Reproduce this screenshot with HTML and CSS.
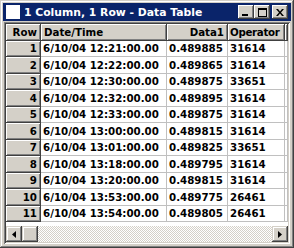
FILE: index.html
```html
<!DOCTYPE html>
<html lang="en">

<head>
    <meta charset="utf-8">
    <meta name="viewport" content="width=device-width, initial-scale=1.0">
    <title>1 Column, 1 Row - Data Table</title>
    <link rel="stylesheet" href="styles.css">
</head>

<body>

    <div class="vindue">
        <div class="titel">
            <span class="ikon"></span>
            <span class="titeltekst">1 Column, 1 Row - Data Table</span>
            <div class="knapper">
                <button class="knap"><svg width="8" height="7" viewBox="0 0 8 7"><rect x="0" y="5" width="6" height="2" fill="#000"/></svg></button>
                <button class="knap"><svg width="9" height="9" viewBox="0 0 9 9"><path d="M0 0h9v9h-9z M1 2v6h7v-6z" fill="#000" fill-rule="evenodd"/></svg></button>
                <button class="knap luk"><svg width="8" height="7" viewBox="0 0 8 7"><path d="M0 0h2l2 2.5 2-2.5h2l-3 3.5 3 3.5h-2l-2-2.5-2 2.5h-2l3-3.5z" fill="#000"/></svg></button>
            </div>
        </div>

        <div class="gitter">
            <div class="tabelomraade">
                <table>
                    <colgroup>
                        <col class="c-row">
                        <col class="c-dato">
                        <col class="c-data">
                        <col class="c-op">
                        <col>
                    </colgroup>
                    <thead>
                        <tr>
                            <th class="hoejre">Row</th>
                            <th>Date/Time</th>
                            <th class="hoejre">Data1</th>
                            <th class="op">Operator</th>
                            <th></th>
                        </tr>
                    </thead>
                    <tbody id="liste"></tbody>
                </table>
            </div>
            <div class="scroll">
                <div class="pil"><svg width="4" height="7" viewBox="0 0 4 7"><path d="M4 0v7l-4-3.5z" fill="#000"/></svg></div>
                <div class="greb"></div>
                <div class="spor"></div>
                <div class="pil"><svg width="4" height="7" viewBox="0 0 4 7"><path d="M0 0v7l4-3.5z" fill="#000"/></svg></div>
            </div>
        </div>
    </div>

    <script>
        let raekker = [
            ["6/10/04 12:21:00.00", "0.489885", "31614"],
            ["6/10/04 12:22:00.00", "0.489865", "31614"],
            ["6/10/04 12:30:00.00", "0.489875", "33651"],
            ["6/10/04 12:32:00.00", "0.489895", "31614"],
            ["6/10/04 12:33:00.00", "0.489875", "31614"],
            ["6/10/04 13:00:00.00", "0.489815", "31614"],
            ["6/10/04 13:01:00.00", "0.489825", "33651"],
            ["6/10/04 13:18:00.00", "0.489795", "31614"],
            ["6/10/04 13:20:00.00", "0.489815", "31614"],
            ["6/10/04 13:53:00.00", "0.489775", "26461"],
            ["6/10/04 13:54:00.00", "0.489805", "26461"]
        ];

        let dest = document.querySelector("#liste");
        raekker.forEach((r, i) => {
            let template = `
                <tr>
                    <td class="nr">${i + 1}</td>
                    <td>${r[0]}</td>
                    <td class="hoejre tal">${r[1]}</td>
                    <td>${r[2]}</td>
                    <td></td>
                </tr>
            `;
            dest.insertAdjacentHTML("beforeend", template);
        })
    </script>
</body>

</html>
```

FILE: styles.css
```css
body {
    margin: 0;
    padding: 0;
    background-color: #d4d0c8;
    font-family: "DejaVu Sans", sans-serif;
    font-weight: bold;
    font-size: 10.25px;
}

.vindue {
    box-sizing: border-box;
    width: 294px;
    height: 248px;
    padding: 3px;
    display: flex;
    flex-direction: column;
    background-color: #d4d0c8;
    box-shadow: inset -1px -1px #404040, inset 1px 1px #d4d0c8, inset -2px -2px #808080, inset 2px 2px #fff;
}

.titel {
    height: 18px;
    display: flex;
    align-items: center;
    background-color: #0a246a;
    color: #fff;
}

.ikon {
    width: 14px;
    height: 14px;
    margin-left: 3px;
    background-color: #fff;
}

.titeltekst {
    margin-left: 4px;
    flex: 1;
    white-space: nowrap;
    font-size: 10.8px;
}

.knapper {
    display: flex;
    margin-right: 3px;
}

.knap {
    box-sizing: border-box;
    width: 16px;
    height: 14px;
    padding: 0;
    border: none;
    display: flex;
    align-items: center;
    justify-content: center;
    background-color: #d4d0c8;
    box-shadow: inset -1px -1px #404040, inset 1px 1px #fff, inset -2px -2px #808080, inset 2px 2px #d4d0c8;
}

.luk {
    margin-left: 2px;
}

.gitter {
    flex: 1;
    margin: 1px;
    display: flex;
    flex-direction: column;
    padding: 2px;
    box-shadow: inset 1px 1px #808080, inset -1px -1px #fff, inset 2px 2px #404040, inset -2px -2px #d4d0c8;
    min-height: 0;
}

.tabelomraade {
    flex: 1;
    overflow: hidden;
    background-color: #fff;
}

table {
    table-layout: fixed;
    border-collapse: separate;
    border-spacing: 0;
    width: 282px;
}

.c-row {
    width: 35px;
}

.c-dato {
    width: 126px;
}

.c-data {
    width: 61px;
}

.c-op {
    width: 57px;
}

tr {
    height: 16.5px;
}

th,
td {
    box-sizing: border-box;
    padding: 0 2px;
    white-space: nowrap;
    overflow: hidden;
    text-align: left;
    line-height: 14px;
    color: #000;
}

th,
td.nr {
    background-color: #d4d0c8;
    border-right: 1px solid #404040;
    border-bottom: 1px solid #404040;
    box-shadow: inset 1px 1px #fff, inset -1px -1px #808080;
}

th {
    padding-left: 3px;
}

th.op {
    padding-left: 2px;
    letter-spacing: -0.3px;
}

td {
    border-right: 1px solid #c0c0c0;
    border-bottom: 1px solid #c0c0c0;
}

td.nr,
.hoejre {
    text-align: right;
    padding-right: 3px;
}

.tal {
    padding-right: 5px;
}

.scroll {
    height: 16px;
    display: flex;
}

.pil,
.greb {
    box-sizing: border-box;
    width: 16px;
    height: 16px;
    display: flex;
    align-items: center;
    justify-content: center;
    background-color: #d4d0c8;
    box-shadow: inset -1px -1px #404040, inset 1px 1px #d4d0c8, inset -2px -2px #808080, inset 2px 2px #fff;
}

.spor {
    flex: 1;
    background: repeating-conic-gradient(#fff 0 25%, #d4d0c8 0 50%) 0 0 / 2px 2px;
}
```
